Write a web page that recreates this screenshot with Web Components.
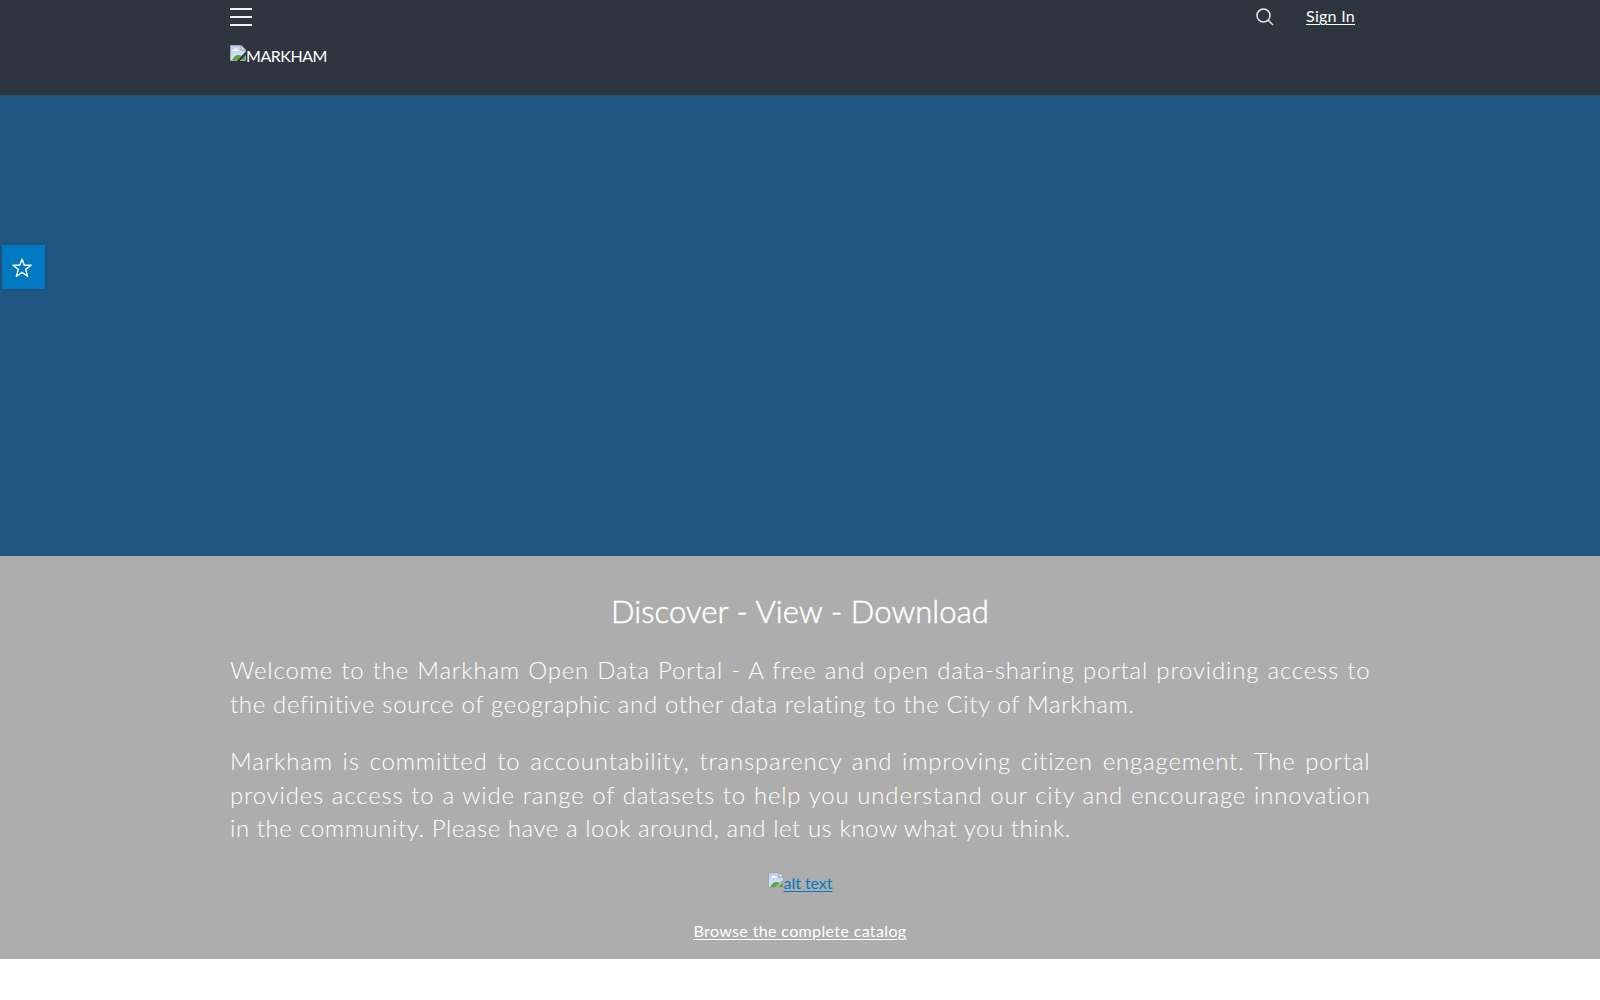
<!DOCTYPE html>
<html lang="en">
<head>
<meta charset="utf-8">
<title>Markham Open Data Portal</title>
<style>
html,body{margin:0;background:#fff}
body{font-family:Lato,"Open Sans",sans-serif;font-size:16px;color:#fff}
</style>
</head>
<body>
<portal-page></portal-page>
<script>
// Adjusts tracking so that a single line of text has the requested width.
class FitText extends HTMLElement{
  connectedCallback(){
    const root=this.attachShadow({mode:'open'});
    root.innerHTML='<style>:host{display:inline-block;white-space:nowrap}span{display:inline-block;letter-spacing:0}:host([line]) span{text-decoration:underline;text-decoration-thickness:1px;text-underline-offset:2px;text-decoration-skip-ink:auto}</style><span><slot></slot></span>';
    const s=root.querySelector('span'),w=+this.getAttribute('w');
    const n=this.textContent.length;
    s.style.letterSpacing=((w-s.getBoundingClientRect().width)/n)+'px';
    this.style.width=w+'px';
  }
}
customElements.define('fit-text',FitText);

class BrokenImage extends HTMLElement{
  constructor(){
    super();
    this.attachShadow({mode:'open'}).innerHTML=`<style>:host{display:block;width:16px;height:16px;flex:none}svg{display:block}</style>
<svg width="16" height="16" viewBox="0 0 16 16"><defs><linearGradient id="s" x2="0" y2="1"><stop stop-color="#b9ccf5"/><stop offset="1" stop-color="#dbe6fd"/></linearGradient></defs>
<path d="M.5.5H11L15.500 5V7L7 15.500H.5Z" fill="url(#s)"/>
<path d="M3 6q0-1.500 1.500-1.500Q5.500 2.500 7 4q1.500 0 1.500 2Z" fill="#fff"/>
<path d="M2 15Q5 9.500 9 10q1.500 0 2.500 1L7.500 15Z" fill="#57aa35"/>
<path d="M15 11V15H10.500Z" fill="#57aa35"/>
<path d="M.5 15.500V.5H11L15.500 5V7M.5 15.500H7M10 15.500h5.500V10.500" fill="none" stroke="#a3a6a9"/><path d="M11 .5V5h4.500Z" fill="#f8f8f8" stroke="#999"/></svg>`;
  }
}
customElements.define('broken-image',BrokenImage);

class SiteHeader extends HTMLElement{
  constructor(){
    super();
    this.attachShadow({mode:'open'}).innerHTML=`<style>
:host{display:block;height:95px;background:#2f353f;box-sizing:border-box}
.bar{display:flex;justify-content:space-between;width:1140px;margin:auto;height:34px}
.menu{display:block;margin-top:7px}
.tools{display:flex;padding-right:15px}.search{margin:8px 32px 0 0}
.sign{line-height:20px;margin-top:6px}
.brand{display:flex;width:1140px;margin:11px auto 0}.brand fit-text{line-height:20px;margin-top:1px}
</style>
<div class="bar"><svg class="menu" width="22" height="20"><path d="M0 2H22M0 10H22M0 18H22" stroke="#f3f3f1" stroke-width="2"/></svg>
<div class="tools"><svg class="search" width="18" height="18" viewBox="0 0 18 18" fill="none" stroke="#e5e6e7" stroke-width="1.500"><circle cx="7.500" cy="7.500" r="6.500"/><path d="M12 12L17 17"/></svg>
<fit-text class="sign" line w="49">Sign In</fit-text></div></div>
<div class="brand"><broken-image></broken-image><fit-text w="81">MARKHAM</fit-text></div>`;
  }
}
customElements.define('site-header',SiteHeader);

class FollowButton extends HTMLElement{
  constructor(){
    super();
    this.attachShadow({mode:'open'}).innerHTML=`<style>:host{display:flex;width:42.500px;height:44px;align-items:center;justify-content:center;background:#0079c1;box-shadow:0 0 4px rgba(0,0,0,.15)}svg{margin:2px 2px 0 0}</style>
<svg width="20" height="20" viewBox="0 0 20 20" fill="none" stroke="#fff" stroke-width="1.350" stroke-linejoin="round"><path d="M10 1.100l2.250 6.100h6.900l-5.500 4.200 2 7.100-5.650-4.200-5.650 4.200 2-7.100-5.500-4.200h6.900z"/></svg>`;
  }
}
customElements.define('follow-button',FollowButton);

class IntroParagraph extends HTMLElement{
  constructor(){
    super();
    this.attachShadow({mode:'open'}).innerHTML=`<style>:host{display:block;font-size:24px;font-weight:300;line-height:33.6px;letter-spacing:.82px}</style><slot></slot>`;
  }
}
customElements.define('intro-paragraph',IntroParagraph);

class JustifiedLine extends HTMLElement{
  constructor(){
    super();
    this.attachShadow({mode:'open'}).innerHTML=`<style>:host{display:block;white-space:nowrap;text-align:justify;text-align-last:justify;width:1140.500px}</style><slot></slot>`;
  }
}
customElements.define('justified-line',JustifiedLine);

class PortalPage extends HTMLElement{
  constructor(){
    super();
    this.attachShadow({mode:'open'}).innerHTML=`<style>
:host{display:block;height:1000px;overflow:hidden;background:#fff}
.banner{height:461px;background:#1f5682}
follow-button{position:absolute;left:2px;top:245px}
main{box-sizing:border-box;height:403px;background:#adadad}
.in{width:1140px;margin:auto;display:flex;flex-direction:column;align-items:center;padding-top:35px}
h1{font-size:31px;font-weight:300;-webkit-text-stroke:.5px #fff;line-height:40px;margin:0 0 22px}
intro-paragraph{width:1140px;margin-bottom:23.800px}
.img{display:flex;color:#0079c1;line-height:20px;margin-top:4.400px}.img broken-image{margin-top:-1px}
.cat{line-height:20px;margin-top:28px}
</style>
<site-header></site-header><div class="banner"><follow-button></follow-button></div>
<main><div class="in"><h1><fit-text w="378">Discover - View - Download</fit-text></h1>
<intro-paragraph><justified-line>Welcome to the Markham Open Data Portal - A free and open data-sharing portal providing access to</justified-line><fit-text w="905">the definitive source of geographic and other data relating to the City of Markham.</fit-text></intro-paragraph>
<intro-paragraph><justified-line>Markham is committed to accountability, transparency and improving citizen engagement. The portal</justified-line><justified-line>provides access to a wide range of datasets to help you understand our city and encourage innovation</justified-line><fit-text w="841">in the community. Please have a look around, and let us know what you think.</fit-text></intro-paragraph>
<div class="img"><broken-image></broken-image><fit-text line w="49">alt text</fit-text></div>
<fit-text class="cat" line w="213">Browse the complete catalog</fit-text></div></main>`;
  }
}
customElements.define('portal-page',PortalPage);
</script>
</body>
</html>
